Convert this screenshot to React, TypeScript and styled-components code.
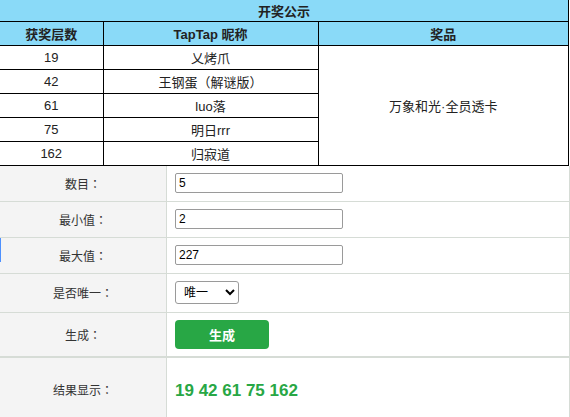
import styled, { createGlobalStyle } from "styled-components";

const Global = createGlobalStyle`
    body {
        margin: 0;
        background: #fff;
        font-family: "Liberation Sans", "Noto Sans CJK SC", sans-serif;
        color: #222;
    }
`;

const Page = styled.div`
    width: 570px;
    overflow: hidden;
`;

const PrizeTable = styled.table`
    width: 569px;
    border-collapse: collapse;
    table-layout: fixed;
    font-size: 13px;
`;

const Row = styled.tr<{ $h: number }>`
    height: ${(p) => p.$h}px;
`;

const Cell = styled.td<{ $head?: boolean }>`
    border: 1px solid #000;
    text-align: center;
    padding: 0;
    background: ${(p) => (p.$head ? "#8adaf8" : "#fff")};
    font-weight: ${(p) => (p.$head ? "bold" : "normal")};
    &:first-child {
        border-left: none;
    }
`;

const TitleCell = styled(Cell)`
    border-top: none;
`;

const Form = styled.div`
    display: grid;
    grid-template-columns: 167px 1fr;
    width: 569px;
    border-right: 1px solid #d6dcd6;
    font-size: 12px;
`;

const Label = styled.div<{ $h: number; $thick?: boolean; $marked?: boolean }>`
    position: relative;
    height: ${(p) => p.$h}px;
    display: flex;
    align-items: center;
    justify-content: center;
    background: #f4f4f4;
    border-right: 1px solid #d6dcd6;
    border-bottom: ${(p) => (p.$thick ? 2 : 1)}px solid #d6dcd6;
    color: #333;
    font-family: "Liberation Sans", "Noto Sans CJK JP", sans-serif;

    &::before {
        content: "";
        display: ${(p) => (p.$marked ? "block" : "none")};
        position: absolute;
        left: 0;
        top: 0;
        width: 1px;
        height: 24px;
        background: #4d90fe;
    }
`;

const Value = styled.div<{ $h: number; $thick?: boolean }>`
    height: ${(p) => p.$h}px;
    display: flex;
    align-items: center;
    padding-left: 8px;
    border-bottom: ${(p) => (p.$thick ? 2 : 1)}px solid #d6dcd6;
`;

const Input = styled.input`
    box-sizing: border-box;
    width: 168px;
    height: 20px;
    border: 1px solid #9a9a9a;
    border-radius: 2px;
    padding: 0 3px;
    font-size: 12px;
    font-family: "Liberation Sans", "Noto Sans CJK SC", sans-serif;
    color: #000;
`;

const Select = styled.select`
    box-sizing: border-box;
    width: 64px;
    height: 23px;
    border: 1px solid #9a9a9a;
    border-radius: 3px;
    padding: 0 4px;
    font-size: 12px;
    font-family: "Liberation Sans", "Noto Sans CJK SC", sans-serif;
    background: #fff;
    color: #000;
`;

const Button = styled.button`
    width: 94px;
    height: 29px;
    border: none;
    border-radius: 4px;
    background: #28a745;
    color: #fff;
    font-size: 13px;
    font-weight: bold;
    font-family: "Liberation Sans", "Noto Sans CJK SC", sans-serif;
`;

const Result = styled.span`
    color: #28a745;
    font-size: 17px;
    font-weight: bold;
    padding-top: 2px;
`;

const winners = [
    { floor: 19, name: "乂烤爪" },
    { floor: 42, name: "王钢蛋（解谜版）" },
    { floor: 61, name: "luo落" },
    { floor: 75, name: "明日rrr" },
    { floor: 162, name: "归寂道" },
];

export default function App() {
    return (
        <Page>
            <Global />
            <PrizeTable>
                <colgroup>
                    <col style={{ width: 103 }} />
                    <col style={{ width: 215 }} />
                    <col />
                </colgroup>
                <tbody>
                    <Row $h={21}>
                        <TitleCell $head colSpan={3}>开奖公示</TitleCell>
                    </Row>
                    <Row $h={24}>
                        <Cell $head>获奖层数</Cell>
                        <Cell $head>TapTap 昵称</Cell>
                        <Cell $head>奖品</Cell>
                    </Row>
                    {winners.map((w, i) => (
                        <Row $h={24} key={w.floor}>
                            <Cell>{w.floor}</Cell>
                            <Cell>{w.name}</Cell>
                            {i === 0 && <Cell rowSpan={5}>万象和光·全员透卡</Cell>}
                        </Row>
                    ))}
                </tbody>
            </PrizeTable>

            <Form>
                <Label $h={35}>数目：</Label>
                <Value $h={35}><Input defaultValue="5" /></Value>

                <Label $h={35}>最小值：</Label>
                <Value $h={35}><Input defaultValue="2" /></Value>

                <Label $h={35} $marked>最大值：</Label>
                <Value $h={35}><Input defaultValue="227" /></Value>

                <Label $h={38}>是否唯一：</Label>
                <Value $h={38}>
                    <Select defaultValue="1">
                        <option value="1">唯一</option>
                        <option value="0">不唯一</option>
                    </Select>
                </Value>

                <Label $h={43} $thick>生成：</Label>
                <Value $h={43} $thick><Button>生成</Button></Value>

                <Label $h={64}>结果显示：</Label>
                <Value $h={64}><Result>19 42 61 75 162</Result></Value>
            </Form>
        </Page>
    );
}
